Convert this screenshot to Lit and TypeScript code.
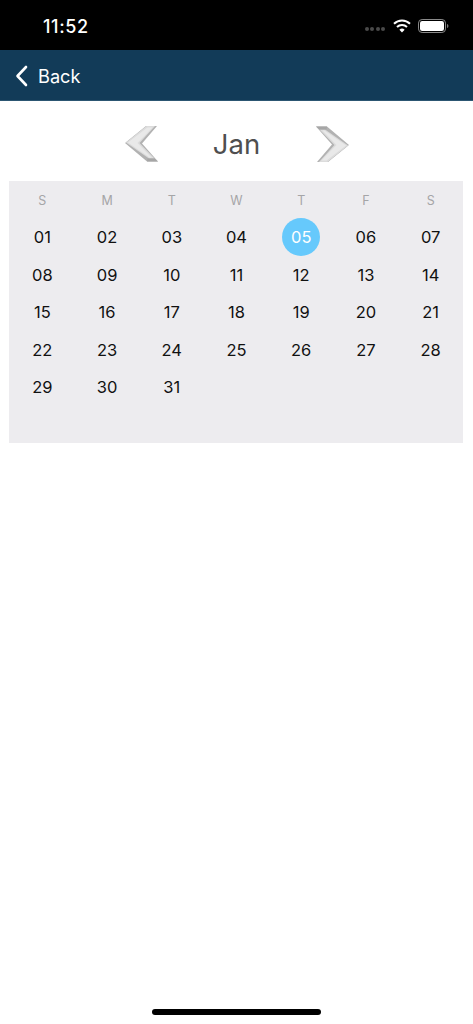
import { LitElement, html, css, svg } from "lit";
import { customElement } from "lit/decorators.js";

const HEAD = ["S", "M", "T", "W", "T", "F", "S"];
const DAYS = Array.from({ length: 31 }, (_, i) => String(i + 1).padStart(2, "0"));

const chevron = (turn: boolean) => html`
  <svg class="chev ${turn ? "turn" : ""}" width="34" height="38" viewBox="0 0 34 38">
    ${svg`
      <polygon points="0,18 21,1 32,1 17,18.5 33,36.5 22,36.5" fill="#b2b2b2"/>
      <polygon points="1,17.5 21.5,1 30,1 14.5,18 29.5,33.5 24,33.5" fill="#dcdcdc"/>
      <polygon points="3,17.5 22.5,2.5 27.5,2.5 12.5,18 26.5,32.5 24.5,32.5" fill="#e9e9e9"/>
      <polygon points="22.5,33.5 29.5,33.5 33,36.5 22,36.5" fill="#a6a6a6"/>
    `}
  </svg>`;

@customElement("app-root")
export class AppRoot extends LitElement {
  static styles = css`
    :host {
      display: block;
      width: 473px;
      height: 1024px;
      background: #fff;
      font-family: Inter, "Liberation Sans", sans-serif;
      overflow: hidden;
      position: relative;
    }
    .status {
      height: 50px;
      background: #000;
      color: #fff;
      display: flex;
      align-items: center;
      padding: 2px 24px 0 43px;
      box-sizing: border-box;
    }
    .time {
      font-size: 18px;
      font-weight: 500;
      flex: 1;
      letter-spacing: 0.6px;
    }
    .sys {
      display: flex;
      align-items: center;
    }
    .dots {
      display: flex;
      gap: 1.5px;
      margin-right: 8px;
      margin-top: 6px;
    }
    .dots span {
      width: 4px;
      height: 4px;
      border-radius: 50%;
      background: #4a4a4a;
    }
    .wifi {
      margin-right: 7px;
    }
    .nav {
      height: 51px;
      box-sizing: border-box;
      background: #123b58;
      border-bottom: 1px solid #2c5672;
      display: flex;
      align-items: center;
      padding: 1px 0 0 15px;
      color: #fff;
      gap: 10px;
    }
    .back {
      font-size: 18.2px;
      font-weight: 400;
    }
    .month {
      height: 80px;
      display: flex;
      align-items: center;
      justify-content: center;
      padding-top: 5px;
      box-sizing: border-box;
    }
    .mname {
      width: 156px;
      text-align: center;
      font-size: 27.5px;
      font-weight: 400;
      color: #4f4f4f;
    }
    .chev.turn {
      transform: rotate(180deg);
    }
    .cal {
      margin: 0 10px 0 9px;
      padding-left: 1px;
      height: 262px;
      background: #edecef;
      display: grid;
      grid-template-columns: repeat(7, 1fr);
      grid-template-rows: 37.5px repeat(5, 37.5px);
      justify-items: center;
      align-items: center;
      align-content: start;
    }
    .h {
      font-size: 12.5px;
      color: #a5a5a7;
      padding-top: 1px;
    }
    .d {
      width: 38px;
      height: 38px;
      border-radius: 50%;
      display: flex;
      align-items: center;
      justify-content: center;
      font-size: 16.5px;
      color: #111;
    }
    .d.sel {
      background: #66c9fc;
      color: #fff;
    }
    .home {
      position: absolute;
      left: 152px;
      bottom: 9px;
      width: 169px;
      height: 6px;
      border-radius: 3px;
      background: #000;
    }
  `;

  render() {
    return html`
      <div class="status">
        <div class="time">11:52</div>
        <div class="sys">
          <div class="dots"><span></span><span></span><span></span><span></span></div>
          <svg class="wifi" width="18" height="14" viewBox="0 0 18 14">
            <path d="M1 4.8 A11.5 11.5 0 0 1 17 4.8" fill="none" stroke="#fff" stroke-width="2"/>
            <path d="M4 8 A7.2 7.2 0 0 1 14 8" fill="none" stroke="#fff" stroke-width="2"/>
            <path d="M6.4 10.8 A3.6 3.6 0 0 1 11.6 10.8 L9 13.6 Z" fill="#fff"/>
          </svg>
          <svg width="31" height="14" viewBox="0 0 31 14">
            <rect x="0.5" y="0.5" width="27" height="13" rx="3.6" fill="none" stroke="#8a8a8a"/>
            <rect x="2" y="2" width="24" height="10" rx="2.2" fill="#fff"/>
            <path d="M29 5 C30 5.3 30.4 6 30.4 7 C30.4 8 30 8.7 29 9 Z" fill="#7a7a7a"/>
          </svg>
        </div>
      </div>
      <div class="nav">
        <svg width="13" height="22" viewBox="0 0 13 22">
          <path d="M11 2 L2.5 11 L11 20" fill="none" stroke="#fff" stroke-width="2.6" stroke-linecap="round" stroke-linejoin="round"/>
        </svg>
        <span class="back">Back</span>
      </div>
      <div class="month">
        ${chevron(false)}
        <div class="mname">Jan</div>
        ${chevron(true)}
      </div>
      <div class="cal">
        ${HEAD.map((h) => html`<div class="h">${h}</div>`)}
        ${DAYS.map((d) => html`<div class="d ${d === "05" ? "sel" : ""}">${d}</div>`)}
      </div>
      <div class="home"></div>
    `;
  }
}
